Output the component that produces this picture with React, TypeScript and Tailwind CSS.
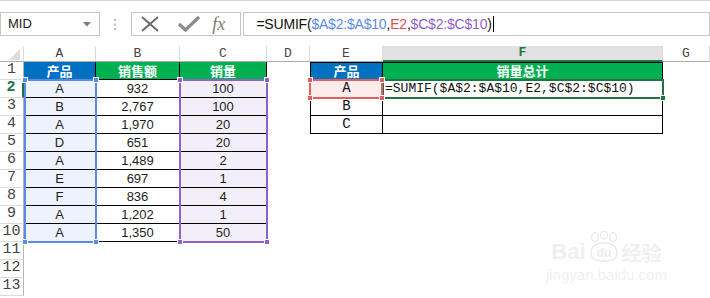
import React from "react";

const ROWS = [
  ["A", "932", "100"],
  ["B", "2,767", "100"],
  ["A", "1,970", "20"],
  ["D", "651", "20"],
  ["A", "1,489", "2"],
  ["E", "697", "1"],
  ["F", "836", "4"],
  ["A", "1,202", "1"],
  ["A", "1,350", "50"],
] as const;

const COLS = ["A", "B", "C", "D", "E", "F", "G"];

const mono = "font-['Liberation_Mono','Noto_Sans_CJK_SC',monospace]";
const sans = "font-['Liberation_Sans',sans-serif]";
const cjk = "font-['Noto_Sans_CJK_SC',sans-serif]";

// selection frame with its corner handles
function Frame({
  className,
  handle,
  corners = "all",
}: {
  className: string;
  handle: string;
  corners?: "all" | "br";
}) {
  const h = `absolute w-[6px] h-[6px] border border-white ${handle}`;
  return (
    <div className={`absolute border-2 ${className}`}>
      {corners === "all" && (
        <>
          <div className={`${h} -left-[4px] -top-[4px]`} />
          <div className={`${h} -right-[4px] -top-[4px]`} />
          <div className={`${h} -left-[4px] -bottom-[4px]`} />
        </>
      )}
      <div className={`${h} -right-[4px] -bottom-[4px]`} />
    </div>
  );
}

function FormulaBar() {
  return (
    <div className="h-[46px] border-t border-[#d6d6d6] pt-[11px] flex items-start">
      {/* Name box */}
      <div className="w-[101px] h-[24px] border border-[#c6c6c6] flex items-center justify-between pl-[7px] pr-[8px]">
        <span className={`${sans} text-[13px] text-[#222]`}>MID</span>
        <svg width="8" height="5" viewBox="0 0 8 5">
          <path d="M0 0H8L4 4.5Z" fill="#7a7a7a" />
        </svg>
      </div>
      <div className="w-[31px] h-[24px] flex items-center justify-center">
        <svg width="3" height="11" viewBox="0 0 3 11">
          <rect x="0" y="0" width="2" height="2" fill="#b9b9b9" />
          <rect x="0" y="4.5" width="2" height="2" fill="#b9b9b9" />
          <rect x="0" y="9" width="2" height="2" fill="#b9b9b9" />
        </svg>
      </div>
      {/* Cancel / enter / fx */}
      <div className="w-[111px] h-[24px] border border-[#c6c6c6] flex items-center pl-[8px]">
        <svg width="20" height="16" viewBox="0 0 20 16">
          <path d="M2 1L18 15M18 1L2 15" stroke="#6a6a6a" strokeWidth="2" fill="none" />
        </svg>
        <svg width="24" height="18" viewBox="0 0 24 18" className="ml-[17px]">
          <path d="M2 9L8.5 15L22 2" stroke="#8a8a8a" strokeWidth="3.2" fill="none" />
        </svg>
        <span className="ml-[11px] font-['Liberation_Serif',serif] italic text-[18px] leading-none text-[#7a7a7a]">
          fx
        </span>
      </div>
      {/* Formula input */}
      <div className="ml-[2px] w-[470px] h-[24px] border border-[#c6c6c6] flex items-center pl-[12px]">
        <span className={`${sans} text-[14px] tracking-[-0.2px] text-[#111]`}>
          =SUMIF(<span className="text-[#5b8be2]">$A$2:$A$10</span>,
          <span className="text-[#e2504f]">E2</span>,
          <span className="text-[#9062c8]">$C$2:$C$10</span>)
        </span>
        <span className="ml-[1px] w-[1px] h-[16px] bg-black" />
      </div>
    </div>
  );
}

export default function App() {
  const rowHeader = (r: number) => (
    <div
      key={`rh${r}`}
      className={
        `${mono} flex items-center justify-center border-b border-b-[#dadada] text-[15px] ` +
        (r === 2
          ? "border-r-2 border-r-[#217346] text-[#217346] font-bold"
          : "border-r border-r-[#b5b5b5] text-[#444]")
      }
    >
      {r}
    </div>
  );

  const cells: React.ReactNode[] = [];

  // column headers
  cells.push(
    <div key="corner" className="flex items-end justify-end pr-[3px] pb-[1px] border-r border-b border-r-[#dadada] border-b-[#ababab]">
      <svg width="11" height="11" viewBox="0 0 11 11">
        <path d="M11 0V11H0Z" fill="#dcdcdc" />
      </svg>
    </div>
  );
  COLS.forEach((c) => {
    cells.push(
      <div
        key={`ch${c}`}
        className={
          `${mono} flex items-center justify-center border-r border-r-[#dadada] text-[13px] ` +
          (c === "F"
            ? "bg-[#e1e1e1] text-[#217346] font-bold border-b-2 border-b-[#217346]"
            : "border-b border-b-[#ababab] text-[#444]")
        }
      >
        {c}
      </div>
    );
  });

  const head = `${cjk} flex items-center justify-center text-white font-bold text-[13px] border-r border-b border-black`;
  const dat = `${sans} flex items-center justify-center text-[13px] text-[#1e1e1e] border-r border-b border-black`;

  for (let r = 1; r <= 13; r++) {
    cells.push(rowHeader(r));
    // A..C
    if (r === 1) {
      cells.push(<div key="a1" className={`${head} bg-[#0070c0]`}>产品</div>);
      cells.push(<div key="b1" className={`${head} bg-[#00b050]`}>销售额</div>);
      cells.push(<div key="c1" className={`${head} bg-[#00b050]`}>销量</div>);
    } else if (r <= 10) {
      const [a, b, c] = ROWS[r - 2];
      cells.push(<div key={`a${r}`} className={`${dat} bg-[#edf2fc]`}>{a}</div>);
      cells.push(<div key={`b${r}`} className={`${dat} bg-white`}>{b}</div>);
      cells.push(<div key={`c${r}`} className={`${dat} bg-[#f2eff9]`}>{c}</div>);
    } else {
      cells.push(<div key={`a${r}`} />, <div key={`b${r}`} />, <div key={`c${r}`} />);
    }
    // D
    cells.push(<div key={`d${r}`} />);
    // E, F
    if (r === 1) {
      cells.push(<div key="e1" className={`${head} bg-[#0070c0] border-l border-t`}>产品</div>);
      cells.push(<div key="f1" className={`${head} bg-[#00b050] border-t`}>销量总计</div>);
    } else if (r <= 4) {
      cells.push(
        <div
          key={`e${r}`}
          className={`${mono} flex items-center justify-center text-[14px] text-[#111] border-l border-r border-b border-black ${r === 2 ? "bg-[#fcecec]" : ""}`}
        >
          {["A", "B", "C"][r - 2]}
        </div>
      );
      cells.push(
        <div key={`f${r}`} className={`${mono} flex items-center pl-[2px] text-[13px] text-[#111] border-r border-b border-black whitespace-nowrap`}>
          {r === 2 ? "=SUMIF($A$2:$A$10,E2,$C$2:$C$10)" : ""}
        </div>
      );
    } else {
      cells.push(<div key={`e${r}`} />, <div key={`f${r}`} />);
    }
    cells.push(<div key={`g${r}`} />);
  }

  return (
    <div className="relative w-[710px] h-[298px] bg-white overflow-hidden">
      <FormulaBar />
      <div className="relative grid grid-cols-[24px_72px_84px_87px_43px_73px_280px_47px] grid-rows-[16px_repeat(13,18px)]">
        {cells}

        {/* reference ranges and the active cell drawn over the grid */}
        <Frame className="left-[24px] top-[33px] w-[73px] h-[164px] border-[#5b8be2]" handle="bg-[#5b8be2]" />
        <Frame className="left-[179px] top-[33px] w-[89px] h-[164px] border-[#9062c8]" handle="bg-[#9062c8]" />
        <Frame className="left-[382px] top-[33px] w-[282px] h-[20px] border-[#217346]" handle="bg-[#217346]" corners="br" />
        <Frame className="left-[309px] top-[33px] w-[74px] h-[20px] border-[#e25d5d]" handle="bg-[#e25d5d]" />
        <div className="absolute left-0 top-[16px] w-[22px] h-[198px]" />
      </div>

      {/* watermark */}
      <div className="absolute left-[546px] top-[231px] flex flex-col items-center text-[#f0f0f0]">
        <div className="flex items-end">
          <span className={`${sans} font-bold text-[22px] leading-none`}>Bai</span>
          <svg width="34" height="32" viewBox="0 0 34 32" className="mx-[1px]">
            <g fill="none" stroke="#e8e8e8" strokeWidth="1.3">
              <ellipse cx="8" cy="6" rx="3.5" ry="4.5" />
              <ellipse cx="17" cy="4" rx="3.5" ry="4" />
              <ellipse cx="26" cy="6" rx="3.5" ry="4.5" />
              <path d="M4 22C4 14 10 12 17 12C24 12 30 14 30 22C30 28 25 30 17 30C9 30 4 28 4 22Z" />
            </g>
            <text x="17" y="26" textAnchor="middle" fontSize="12" fontWeight="bold" fill="#ebebeb" fontFamily="Liberation Sans">du</text>
          </svg>
          <span className={`${cjk} font-bold text-[20px] leading-none`}>经验</span>
        </div>
        <span className={`${sans} text-[15px] leading-none mt-[4px]`}>jingyan.baidu.com</span>
      </div>
    </div>
  );
}
